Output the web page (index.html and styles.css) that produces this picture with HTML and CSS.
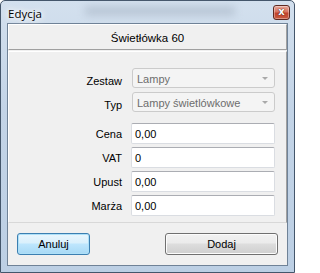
FILE: index.html
```html
<!DOCTYPE html>
<html>
<head>
<meta charset="utf-8">
<link rel="stylesheet" href="styles.css">
</head>
<body>
<div class="window">
  <div class="titlebar">
    <div class="glass-blur"></div>
    <span class="title">Edycja</span>
    <div class="close"><span>x</span></div>
  </div>
  <div class="client">
    <div class="header">Świetłówka 60</div>
    <div class="fields">
      <div class="grid">
        <label class="lbl lbl-combo">Zestaw</label>
        <div class="combo"><span>Lampy</span><i class="arrow"></i></div>
        <label class="lbl lbl-combo">Typ</label>
        <div class="combo"><span>Lampy świetlówkowe</span><i class="arrow"></i></div>
      </div>
      <div class="grid inputs">
        <label class="lbl">Cena</label>
        <div class="input">0,00</div>
        <label class="lbl">VAT</label>
        <div class="input">0</div>
        <label class="lbl">Upust</label>
        <div class="input">0,00</div>
        <label class="lbl">Marża</label>
        <div class="input">0,00</div>
      </div>
    </div>
    <div class="buttons">
      <div class="btn btn-focus">Anuluj</div>
      <div class="btn btn-normal">Dodaj</div>
    </div>
  </div>
</div>
</body>
</html>
```

FILE: styles.css
```css
* { box-sizing: border-box; }
html, body { margin: 0; padding: 0; }
body {
  width: 295px;
  height: 273px;
  background: #ffffff;
  font-family: "Liberation Sans", Arial, sans-serif;
  font-size: 11px;
  color: #000;
  overflow: hidden;
}
.window {
  width: 295px;
  height: 273px;
  border: 1px solid #44566b;
  border-radius: 5px 5px 0 0;
  background: linear-gradient(to bottom, #d3e0ee 0%, #c3d4e7 40%, #bccfe4 100%);
  padding: 0 6px 6px 6px;
  display: flex;
  flex-direction: column;
}
.titlebar {
  position: relative;
  height: 22px;
  display: flex;
  align-items: center;
}
.glass-blur {
  position: absolute;
  left: 78px;
  top: 6px;
  width: 150px;
  height: 8px;
  background: #9daabb;
  filter: blur(4px);
  opacity: 0.55;
}
.title {
  position: relative;
  margin-left: 1px;
  margin-top: 2px;
  font-family: "Open Sans", "Liberation Sans", sans-serif;
  font-size: 11.5px;
  color: #000;
  text-shadow: 0 0 5px #fff, 0 0 8px #fff, 0 0 10px #fff;
}
.close {
  position: absolute;
  right: -2px;
  top: 4px;
  width: 17px;
  height: 15px;
  border: 1px solid #5e2a22;
  border-radius: 3px;
  background: linear-gradient(to bottom, #e7a89b 0%, #d8735f 45%, #c2432c 55%, #c85a3f 100%);
  box-shadow: inset 0 0 0 1px rgba(255,255,255,0.35);
  display: flex;
  align-items: center;
  justify-content: center;
}
.close span {
  font-family: "DejaVu Sans", sans-serif;
  font-weight: bold;
  font-size: 10px;
  line-height: 10px;
  color: #fff;
  margin-top: -1px;
  text-shadow: 0 0 1px #4a1a12, 0 0 1px #4a1a12;
}
.client {
  flex: 1;
  border: 1px solid #6f8297;
  background: #f0f0f0;
  display: flex;
  flex-direction: column;
}
.header {
  height: 26px;
  border-top: 1px solid #ffffff;
  border-left: 1px solid #ffffff;
  border-right: 1px solid #a0a0a0;
  border-bottom: 1px solid #a0a0a0;
  display: flex;
  align-items: center;
  justify-content: center;
  font-size: 11.5px;
  padding-top: 1px;
  margin-bottom: 1px;
}
.fields {
  height: 172px;
  border-top: 1px solid #ffffff;
  border-left: 1px solid #ffffff;
  border-right: 1px solid #a0a0a0;
  border-bottom: 1px solid #d8d8d8;
  padding-top: 16px;
}
.grid {
  display: grid;
  grid-template-columns: 113px 144px;
  column-gap: 9px;
  row-gap: 4px;
}
.grid.inputs {
  margin-top: 11px;
  row-gap: 3px;
}
.lbl {
  text-align: right;
  display: flex;
  align-items: center;
  justify-content: flex-end;
}
.lbl-combo {
  align-items: flex-start;
  padding-top: 7px;
}
.combo {
  height: 20px;
  margin-left: 1px;
  border: 1px solid #cbcbcb;
  border-radius: 3px;
  background: #f4f4f4;
  color: #6d6d6d;
  display: flex;
  align-items: center;
  padding-left: 4px;
  position: relative;
}
.combo span { margin-top: 1px; }
.arrow {
  position: absolute;
  right: 6px;
  top: 8px;
  width: 0;
  height: 0;
  border-left: 3.5px solid transparent;
  border-right: 3.5px solid transparent;
  border-top: 3.5px solid #a9a9a9;
}
.input {
  height: 21px;
  border: 1px solid #dadde2;
  border-top-color: #abadb3;
  border-radius: 2px;
  background: #ffffff;
  display: flex;
  align-items: center;
  padding-left: 3px;
}
.buttons {
  flex: 1;
  display: flex;
  justify-content: space-between;
  align-items: flex-start;
  padding: 10px 9px 0 9px;
}
.btn {
  height: 22px;
  border-radius: 3px;
  display: flex;
  align-items: center;
  justify-content: center;
  font-size: 11px;
}
.btn-focus {
  width: 73px;
  border: 1px solid #3c7fb1;
  background: linear-gradient(to bottom, #eaf6fd 0%, #d9f0fc 45%, #bee6fd 50%, #a7d9f5 100%);
  box-shadow: inset 0 0 0 1px #aee0f8;
}
.btn-normal {
  width: 113px;
  border: 1px solid #707070;
  background: linear-gradient(to bottom, #f2f2f2 0%, #ebebeb 45%, #dddddd 50%, #cfcfcf 100%);
  box-shadow: inset 0 0 0 1px #fcfcfc;
}
```
